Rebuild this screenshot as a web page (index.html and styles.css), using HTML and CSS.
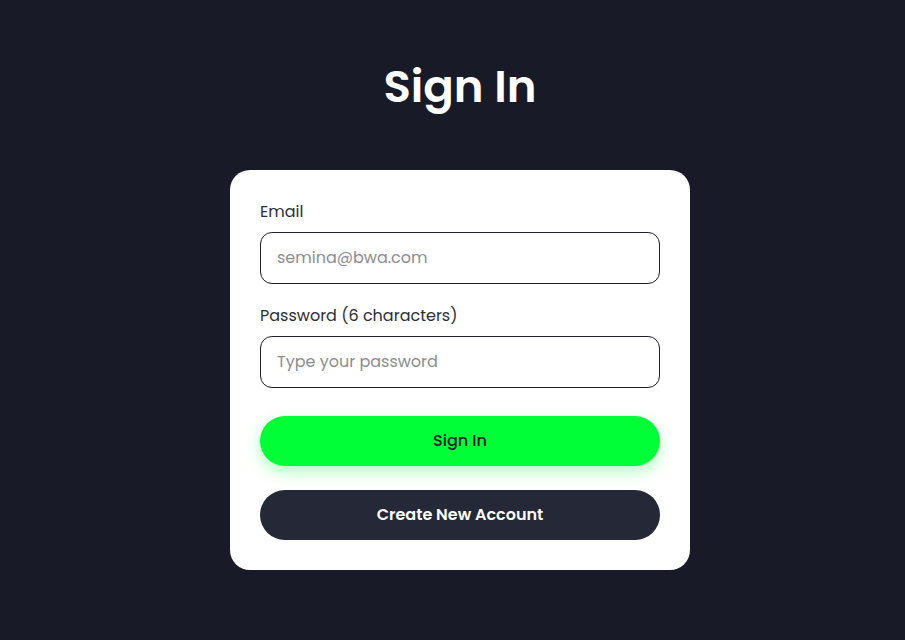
FILE: index.html
```html
<!DOCTYPE html>
<html lang="en">
<head>
<meta charset="utf-8">
<title>Sign In</title>
<link rel="stylesheet" href="styles.css">
</head>
<body>
<main class="page">
  <h1 class="title">Sign In</h1>
  <form class="card">
    <label class="label" for="email">Email</label>
    <input class="input" id="email" type="email" placeholder="semina@bwa.com">
    <label class="label label-gap" for="password">Password (6 characters)</label>
    <input class="input" id="password" type="password" placeholder="Type your password">
    <button class="btn btn-primary" type="button">Sign In</button>
    <button class="btn btn-dark" type="button">Create New Account</button>
  </form>
</main>
</body>
</html>
```

FILE: styles.css
```css
* { box-sizing: border-box; }
html, body { margin: 0; padding: 0; }
body {
  background: #181b27;
  font-family: "Poppins", "Inter", "Noto Sans", sans-serif;
  height: 640px;
}
.page {
  display: flex;
  flex-direction: column;
  align-items: center;
  padding-top: 58px;
  padding-left: 15px;
}
.title {
  margin: 0;
  color: #ffffff;
  font-size: 45px;
  font-weight: 600;
  line-height: 58px;
}
.card {
  margin-top: 54px;
  width: 460px;
  background: #ffffff;
  border-radius: 20px;
  padding: 30px;
  display: flex;
  flex-direction: column;
}
.label {
  font-size: 16px;
  line-height: 24px;
  color: #2e2e36;
  margin-bottom: 8px;
}
.label-gap { margin-top: 20px; }
.input {
  height: 52px;
  border: 1px solid #1e1f29;
  border-radius: 12px;
  padding: 0 16px 2px;
  font-family: inherit;
  font-size: 16px;
  color: #1e1f29;
  outline: none;
}
.input::placeholder { color: #8c8c92; }
.btn {
  height: 50px;
  border: none;
  border-radius: 25px;
  padding: 0 0 2px;
  font-family: inherit;
  font-size: 16px;
  cursor: pointer;
}
.btn-primary {
  margin-top: 28px;
  background: #00ff36;
  color: #1b1d27;
  font-weight: 500;
  box-shadow: 0 6px 16px rgba(0, 255, 54, 0.3);
}
.btn-dark {
  margin-top: 24px;
  background: #252836;
  color: #ffffff;
  font-weight: 600;
}
```
